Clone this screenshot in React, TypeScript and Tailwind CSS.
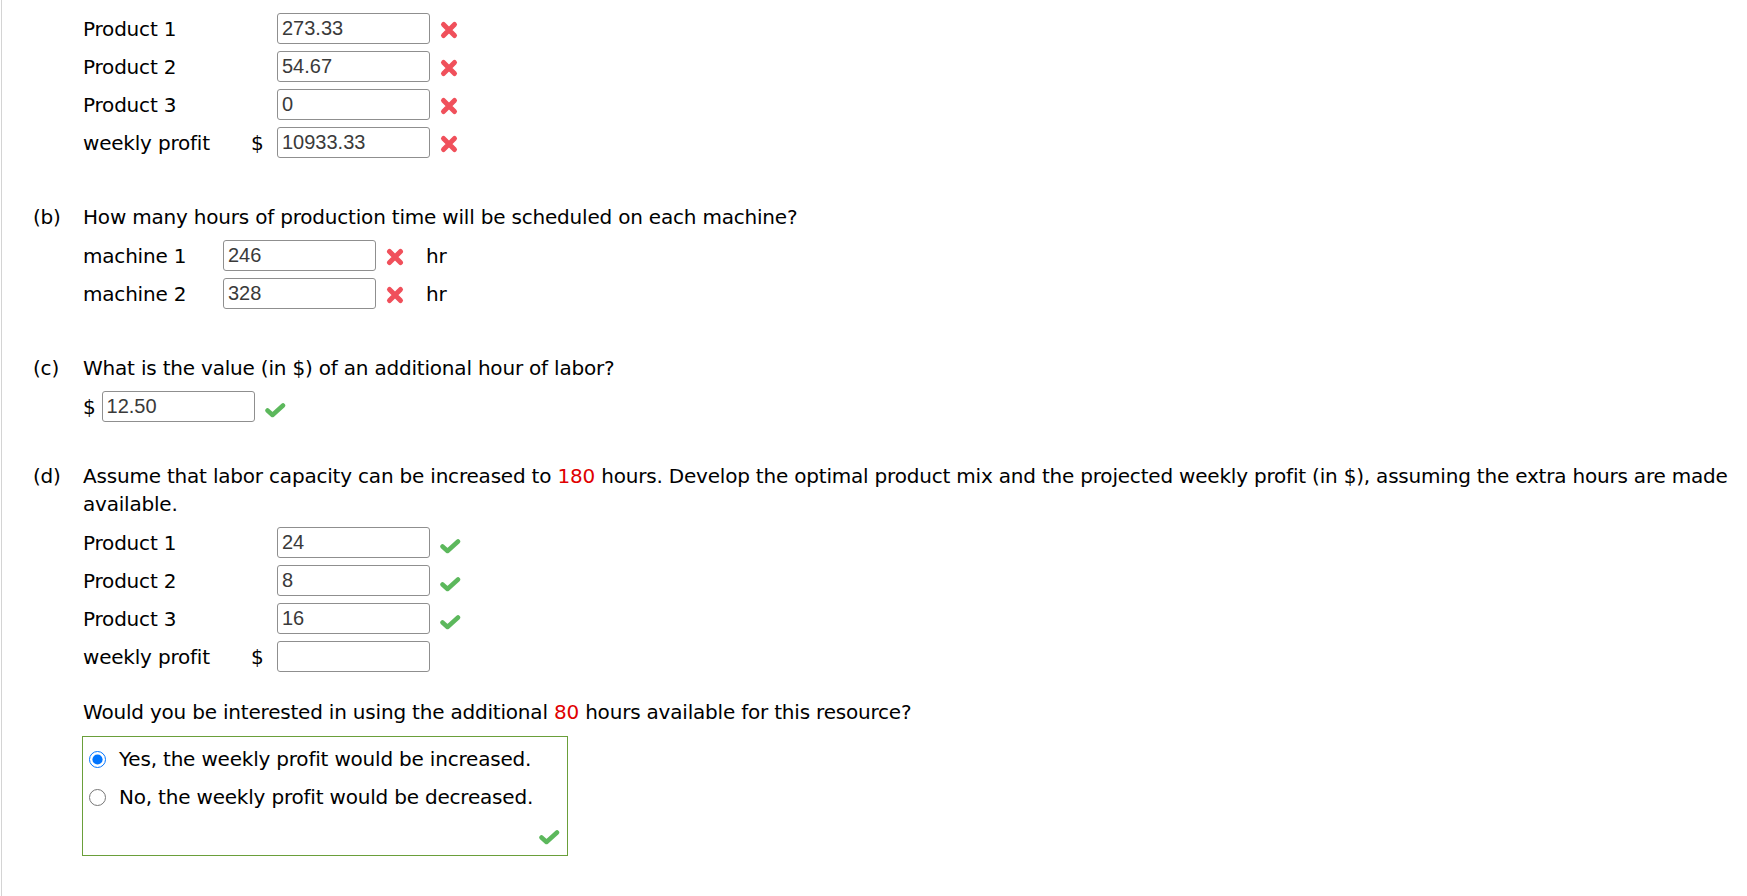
import React from "react";

const XMark: React.FC = () => (
  <svg width="20" height="20" viewBox="0 0 20 20" className="shrink-0">
    <path
      d="M4.5 4.5L15.5 15.5M15.5 4.5L4.5 15.5"
      stroke="#f0505b"
      strokeWidth="5"
      strokeLinecap="round"
    />
  </svg>
);

const Check: React.FC<{ className?: string }> = ({ className = "" }) => (
  <svg width="22" height="16" viewBox="0 0 22 16" className={"shrink-0 " + className}>
    <path
      d="M3.5 8.5L8.5 13L19 3.5"
      fill="none"
      stroke="#5cb85c"
      strokeWidth="4.5"
      strokeLinecap="round"
      strokeLinejoin="round"
    />
  </svg>
);

const Answer: React.FC<{ value: string }> = ({ value }) => (
  <input
    readOnly
    defaultValue={value}
    className="w-[153px] h-[31px] shrink-0 border border-[#8f8f8f] rounded-[3px] px-[4px] bg-white font-['Liberation_Sans',Arial,sans-serif] text-[20px] tracking-normal text-[#3a3a3a] outline-none"
  />
);

type Row = { label: string; value: string; dollar?: boolean; mark?: "x" | "check" };

const ProductRow: React.FC<Row> = ({ label, value, dollar, mark }) => (
  <div className="flex items-center h-[31px]">
    <span className="w-[168px] shrink-0">{label}</span>
    <span className="w-[26px] shrink-0">{dollar ? "$" : ""}</span>
    <Answer value={value} />
    {mark === "x" && (
      <span className="ml-[9px] mt-[2px] flex">
        <XMark />
      </span>
    )}
    {mark === "check" && <Check className="ml-[9px] mt-[6px]" />}
  </div>
);

const Question: React.FC<{ tag: string; children: React.ReactNode; className?: string }> = ({
  tag,
  children,
  className = "",
}) => (
  <div className={"flex " + className}>
    <span className="w-[50px] shrink-0">{tag}</span>
    <div className="flex-1">{children}</div>
  </div>
);

export default function App() {
  return (
    <div className="h-[896px] w-full bg-white overflow-hidden">
      <div className="h-full ml-px border-l border-[#d4d4d4] pl-[31px] font-['DejaVu_Sans',Verdana,sans-serif] text-[20px] leading-[28px] tracking-[-0.2px] text-black">
        {/* end of (a) */}
        <div className="pl-[50px] pt-[13px] flex flex-col gap-[7px]">
          <ProductRow label="Product 1" value="273.33" mark="x" />
          <ProductRow label="Product 2" value="54.67" mark="x" />
          <ProductRow label="Product 3" value="0" mark="x" />
          <ProductRow label="weekly profit" value="10933.33" dollar mark="x" />
        </div>

        {/* (b) */}
        <Question tag="(b)" className="mt-[45px]">
          How many hours of production time will be scheduled on each machine?
        </Question>
        <div className="pl-[50px] mt-[9px] flex flex-col gap-[7px]">
          {[
            ["machine 1", "246"],
            ["machine 2", "328"],
          ].map(([label, value]) => (
            <div key={label} className="flex items-center h-[31px]">
              <span className="w-[140px] shrink-0">{label}</span>
              <Answer value={value} />
              <span className="ml-[9px] mt-[2px] flex">
                <XMark />
              </span>
              <span className="ml-[21px]">hr</span>
            </div>
          ))}
        </div>

        {/* (c) */}
        <Question tag="(c)" className="mt-[45px]">
          What is the value (in $) of an additional hour of labor?
        </Question>
        <div className="pl-[50px] mt-[9px] flex items-center h-[31px]">
          <span>$</span>
          <span className="ml-[6px] flex">
            <Answer value="12.50" />
          </span>
          <Check className="ml-[9px] mt-[6px]" />
        </div>

        {/* (d) */}
        <Question tag="(d)" className="mt-[40px]">
          Assume that labor capacity can be increased to <span className="text-[#e00000]">180</span> hours.
          Develop the optimal product mix and the projected weekly profit (in $), assuming the extra
          hours are made available.
        </Question>
        <div className="pl-[50px] mt-[9px] flex flex-col gap-[7px]">
          <ProductRow label="Product 1" value="24" mark="check" />
          <ProductRow label="Product 2" value="8" mark="check" />
          <ProductRow label="Product 3" value="16" mark="check" />
          <ProductRow label="weekly profit" value="" dollar />
        </div>

        <div className="pl-[50px] mt-[26px]">
          Would you be interested in using the additional <span className="text-[#e00000]">80</span> hours
          available for this resource?
        </div>

        <div className="ml-[49px] mt-[10px] w-[486px] h-[120px] border border-[#6a9f3a] pt-[8px] pb-[10px] pr-[7px] flex flex-col">
          <label className="flex items-center h-[28px]">
            <input type="radio" name="use" defaultChecked className="w-[17px] h-[17px] m-0 ml-[6px]" />
            <span className="ml-[13px]">Yes, the weekly profit would be increased.</span>
          </label>
          <label className="flex items-center h-[28px] mt-[10px]">
            <input type="radio" name="use" className="w-[17px] h-[17px] m-0 ml-[6px]" />
            <span className="ml-[13px]">No, the weekly profit would be decreased.</span>
          </label>
          <div className="mt-auto flex justify-end">
            <Check />
          </div>
        </div>
      </div>
    </div>
  );
}
